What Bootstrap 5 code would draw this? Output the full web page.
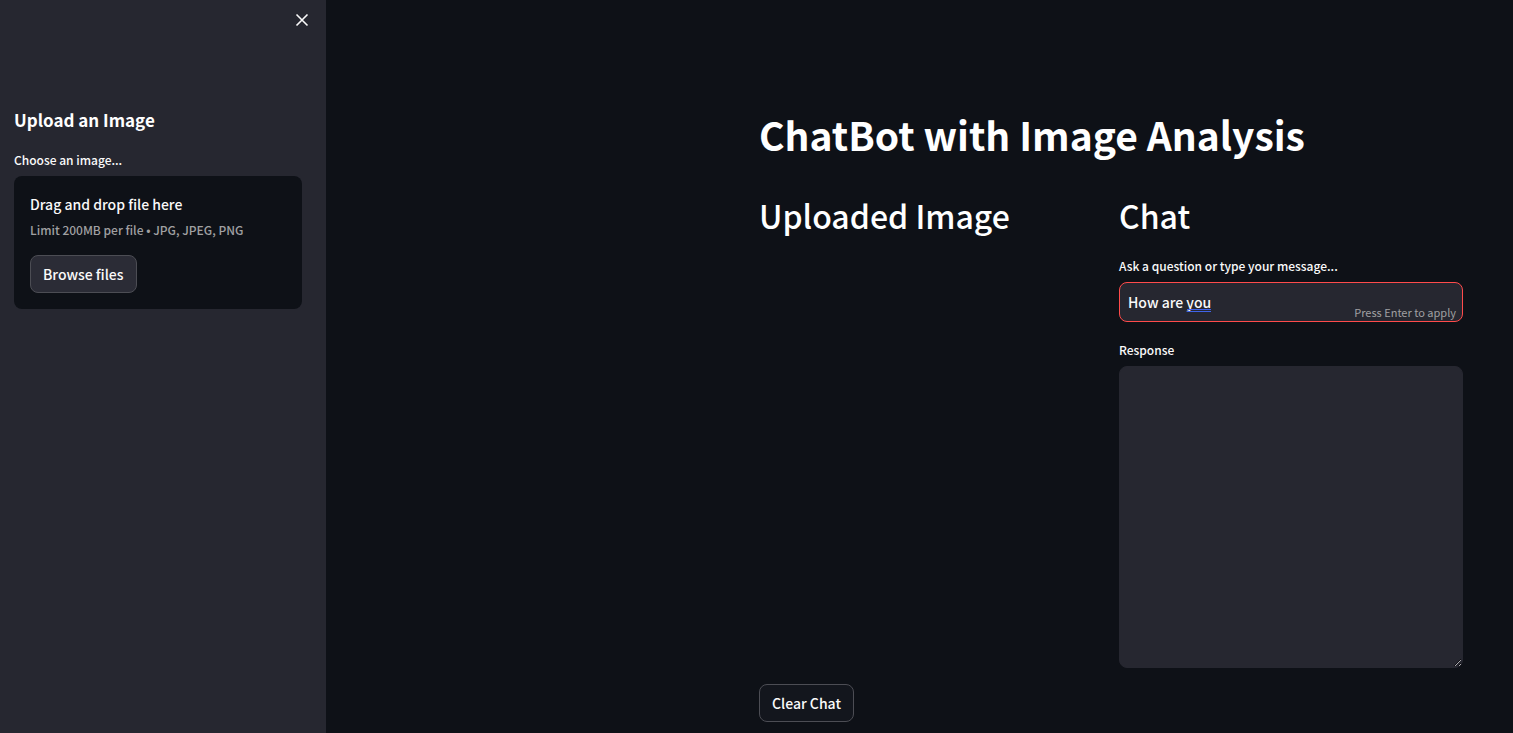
<!DOCTYPE html>
<html lang="en" data-bs-theme="dark">
<head>
<meta charset="utf-8">
<meta name="viewport" content="width=device-width, initial-scale=1">
<title>ChatBot with Image Analysis</title>
<link href="https://cdn.jsdelivr.net/npm/bootstrap@5.3.0/dist/css/bootstrap.min.css" rel="stylesheet">
<style>
  :root { --ink: #fafafa; --page: #0e1117; --panel: #262730; --muted: #a0a0a2; --accent: #ff4b4b; }
  body { background: var(--page); color: var(--ink); font-family: "Noto Sans CJK JP", "Noto Sans", sans-serif; font-size: 14px; font-weight: 500; line-height: 24px; }
  .sidebar { width: 326px; background: var(--panel); padding: 108px 24px 24px 14px; }
  .close-btn { top: 8px; right: 12px; width: 24px; height: 24px; color: var(--ink); line-height: 0; }
  .side-title { font-size: 17px; line-height: 24px; margin-bottom: 18px; font-weight: 700; }
  .field-label { display: block; font-size: 12px; line-height: 20px; margin-bottom: 6px; }
  .dropzone { background: var(--page); border-radius: 8px; padding: 16px; }
  .hint { color: var(--muted); font-size: 12px; line-height: 20px; margin: 4px 0 15px; }
  .btn-outline { --bs-btn-color: var(--ink); --bs-btn-border-color: #4c4d54; --bs-btn-hover-color: var(--accent); --bs-btn-hover-border-color: var(--accent); --bs-btn-font-size: 14px; --bs-btn-font-weight: 500; --bs-btn-line-height: 24px; --bs-btn-padding-x: 12px; --bs-btn-padding-y: 6px; --bs-btn-border-radius: 8px; --bs-btn-bg: #13161d; }
  .btn-browse { --bs-btn-bg: #2b2c36; }
  .main-area { padding: 108px 50px 10px 32px; }
  .block { max-width: 704px; }
  .page-title { font-size: 39px; line-height: 53px; font-weight: 700; margin-bottom: 33px; }
  .col-title { font-size: 32px; line-height: 43px; font-weight: 500; margin-bottom: 19px; }
  .field, .field:focus { background: var(--panel); color: var(--ink); border: 1px solid var(--panel); border-radius: 8px; font-size: 14px; font-weight: 500; line-height: 24px; padding: 7px 8px; box-shadow: none; }
  .message-box { margin-bottom: 18px; }
  .message, .message:focus { border-color: var(--accent); }
  .apply-note { right: 7px; bottom: 0; font-size: 11px; font-weight: 400; line-height: 20px; color: var(--muted); }
  .spell-mark { left: 68px; bottom: 10px; width: 24px; height: 3px; border: solid #3f63e8; border-width: 1px 0; }
  .response { height: 302px; }
</style>
</head>
<body>
<div class="d-flex min-vh-100">
  <aside class="sidebar position-relative flex-shrink-0">
    <button type="button" class="close-btn btn p-0 border-0 position-absolute" aria-label="Close sidebar">
      <svg width="24" height="24" viewBox="0 0 24 24" fill="none" stroke="currentColor" stroke-width="1.6"><path d="M6.5 6.5l11 11M17.5 6.5l-11 11"/></svg>
    </button>
    <h2 class="side-title">Upload an Image</h2>
    <label class="field-label" for="browse">Choose an image...</label>
    <div class="dropzone">
      <div>Drag and drop file here</div>
      <div class="hint">Limit 200MB per file • JPG, JPEG, PNG</div>
      <button type="button" id="browse" class="btn btn-outline btn-browse">Browse files</button>
    </div>
  </aside>
  <main class="main-area flex-grow-1">
    <div class="block ms-auto">
      <h1 class="page-title">ChatBot with Image Analysis</h1>
      <div class="row gx-3 mb-3">
        <section class="col-6">
          <h2 class="col-title">Uploaded Image</h2>
        </section>
        <section class="col-6">
          <h2 class="col-title">Chat</h2>
          <label class="field-label" for="message">Ask a question or type your message...</label>
          <div class="message-box position-relative">
            <input type="text" id="message" class="field message form-control" value="How are you" spellcheck="false">
            <span class="spell-mark position-absolute"></span>
            <span class="apply-note position-absolute">Press Enter to apply</span>
          </div>
          <label class="field-label" for="response">Response</label>
          <textarea id="response" class="field response form-control"></textarea>
        </section>
      </div>
      <button type="button" class="btn btn-outline">Clear Chat</button>
    </div>
  </main>
</div>
<script src="https://cdn.jsdelivr.net/npm/bootstrap@5.3.0/dist/js/bootstrap.bundle.min.js"></script>
</body>
</html>
